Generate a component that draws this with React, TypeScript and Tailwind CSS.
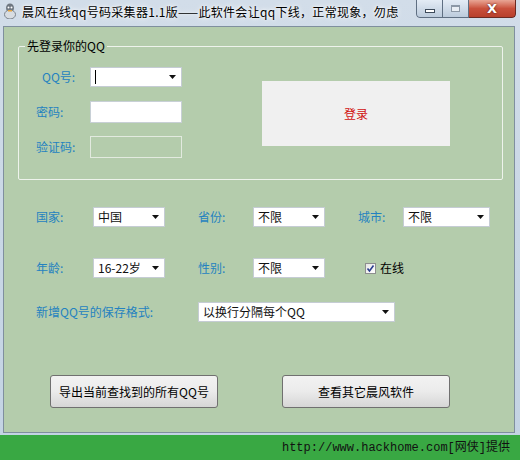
import React from "react";

const FONT = { fontFamily: '"Noto Sans CJK SC", "Noto Sans", sans-serif' };

function Arrow() {
  return (
    <svg width="7" height="4" viewBox="0 0 7 4" className="shrink-0">
      <path d="M0 0 H7 L3.5 4 Z" fill="#111" />
    </svg>
  );
}

function Combo({ w, text, cursor }: { w: string; text?: string; cursor?: boolean }) {
  return (
    <div className={`${w} h-[20px] bg-white border border-[#c5ccd4] flex items-center justify-between pl-[4px] pr-[5px] shrink-0`}>
      <span className="text-[12px] leading-none text-[#111] whitespace-nowrap flex items-center">
        {cursor ? <span className="inline-block w-[1px] h-[14px] bg-black" /> : text}
      </span>
      <Arrow />
    </div>
  );
}

function Label({ children, w, pl }: { children: React.ReactNode; w: string; pl?: string }) {
  return (
    <div className={`${w} ${pl ?? ""} shrink-0 text-[12px] leading-none text-[#2482c0] whitespace-nowrap`}>{children}</div>
  );
}

function WinButton({ children, className }: { children: React.ReactNode; className: string }) {
  return <div className={`h-[18px] flex items-center justify-center border border-[#5f6f82] border-t-0 ${className}`}>{children}</div>;
}

export default function App() {
  return (
    <div className="w-[520px] h-[460px] overflow-hidden bg-gradient-to-b from-[#d2dde9] via-[#c9d7e6] to-[#c3d3e3] flex flex-col" style={FONT}>
      {/* title bar */}
      <div className="h-[26px] flex items-start shrink-0">
        <svg width="14" height="16" viewBox="0 0 14 16" className="ml-[3px] mt-[3px]">
          <ellipse cx="7" cy="5" rx="4" ry="4.5" fill="#6f7780" />
          <ellipse cx="7" cy="11.5" rx="5.5" ry="4.5" fill="#d8dde2" stroke="#7b838c" strokeWidth="1" />
          <circle cx="5.5" cy="4.5" r="1" fill="#fff" />
          <circle cx="8.5" cy="4.5" r="1" fill="#fff" />
          <rect x="5" y="7" width="4" height="1.5" fill="#e3a33a" />
        </svg>
        <div className="ml-[5px] mt-[4px] text-[12px] tracking-[0.3px] leading-[16px] text-black whitespace-nowrap [text-shadow:0_0_6px_#ffffff,0_0_3px_#ffffff]">
          晨风在线qq号码采集器1.1版——此软件会让qq下线，正常现象，勿虑
        </div>
        <div className="flex-1" />
        <div className="flex mr-[4px] rounded-b-[4px] overflow-hidden">
          <WinButton className="w-[27px] bg-gradient-to-b from-[#e4ecf5] to-[#bccbdc] rounded-bl-[4px]">
            <div className="w-[10px] h-[4px] bg-white border border-[#3d4a5a] mt-[5px]" />
          </WinButton>
          <WinButton className="w-[26px] bg-gradient-to-b from-[#e4ecf5] to-[#bccbdc] border-l-0">
            <div className="w-[9px] h-[7px] border border-[#8c98a6] border-t-[2px] bg-[#e9eef4]" />
          </WinButton>
          <WinButton className="w-[47px] bg-gradient-to-b from-[#e8a595] via-[#c9503c] to-[#b8402c] border-l-0 rounded-br-[4px] border-[#6b2a22]">
            <span className="text-white text-[13px] font-bold leading-none [text-shadow:0_0_2px_#40100a]" style={{ fontFamily: '"DejaVu Sans", sans-serif' }}>
              X
            </span>
          </WinButton>
        </div>
      </div>

      {/* client area */}
      <div className="ml-[3px] w-[512px] h-[407px] shrink-0 border border-[#7f8f9e] bg-[#b4ccac] flex flex-col">
        {/* group box */}
        <div className="relative ml-[14px] mt-[19px] w-[485px] h-[134px] border border-[#eef3ec] rounded-[2px] flex items-start shrink-0">
          <span className="absolute left-[6px] top-[-8px] bg-[#b4ccac] px-[2px] text-[12px] leading-[14px] text-black">先登录你的QQ</span>
          <div className="flex flex-col pt-[20px]">
            <div className="flex items-center h-[20px]">
              <Label w="w-[71px]" pl="pl-[23px]">QQ号:</Label>
              <Combo w="w-[92px]" cursor />
            </div>
            <div className="flex items-center h-[22px] mt-[14px]">
              <Label w="w-[71px]" pl="pl-[17px]">密码:</Label>
              <div className="w-[92px] h-[22px] bg-white border border-[#c8d0d6]" />
            </div>
            <div className="flex items-center h-[22px] mt-[13px]">
              <Label w="w-[71px]" pl="pl-[17px]">验证码:</Label>
              <div className="w-[92px] h-[22px] border border-[#e2eadf]" />
            </div>
          </div>
          <div className="ml-[80px] mt-[34px] w-[188px] h-[65px] bg-[#f0f0f0] flex items-center justify-center text-[12px] text-[#d01010]">
            登录
          </div>
        </div>

        {/* row 1 */}
        <div className="flex items-center h-[20px] mt-[27px] pl-[32px]">
          <Label w="w-[57px]">国家:</Label>
          <Combo w="w-[72px]" text="中国" />
          <Label w="w-[55px] ml-[33px]">省份:</Label>
          <Combo w="w-[72px]" text="不限" />
          <Label w="w-[45px] ml-[33px]">城市:</Label>
          <Combo w="w-[87px]" text="不限" />
        </div>

        {/* row 2 */}
        <div className="flex items-center h-[20px] mt-[31px] pl-[32px]">
          <Label w="w-[57px]">年龄:</Label>
          <Combo w="w-[72px]" text="16-22岁" />
          <Label w="w-[55px] ml-[33px]">性别:</Label>
          <Combo w="w-[72px]" text="不限" />
          <div className="ml-[40px] w-[11px] h-[11px] border border-[#8e8f8f] bg-gradient-to-br from-[#e6e6e6] to-[#ffffff] flex items-center justify-center">
            <svg width="9" height="9" viewBox="0 0 9 9">
              <path d="M1.5 4.5 L3.5 7 L7.5 1.5" stroke="#2a3d8f" strokeWidth="1.6" fill="none" />
            </svg>
          </div>
          <span className="ml-[4px] text-[12px] leading-none text-black">在线</span>
        </div>

        {/* row 3 */}
        <div className="flex items-center h-[20px] mt-[24px] pl-[32px]">
          <Label w="w-[162px]">新增QQ号的保存格式:</Label>
          <Combo w="w-[197px]" text="以换行分隔每个QQ" />
        </div>

        {/* buttons */}
        <div className="flex mt-[53px] pl-[46px]">
          <div className="w-[168px] h-[33px] rounded-[3px] border border-[#707070] bg-gradient-to-b from-[#f2f2f2] via-[#ebebeb] to-[#d6d6d6] flex items-center justify-center text-[12px] text-black">
            导出当前查找到的所有QQ号
          </div>
          <div className="ml-[64px] w-[168px] h-[33px] rounded-[3px] border border-[#707070] bg-gradient-to-b from-[#f2f2f2] via-[#ebebeb] to-[#d6d6d6] flex items-center justify-center text-[12px] text-black">
            查看其它晨风软件
          </div>
        </div>
      </div>

      {/* footer */}
      <div className="mt-[2px] flex-1 bg-[#39a843] flex items-center justify-end pr-[10px]">
        <span className="text-[12px] leading-none text-[#111]" style={{ fontFamily: '"Liberation Mono", "Noto Sans CJK SC", monospace' }}>
          http://www.hackhome.com[网侠]提供
        </span>
      </div>
    </div>
  );
}
